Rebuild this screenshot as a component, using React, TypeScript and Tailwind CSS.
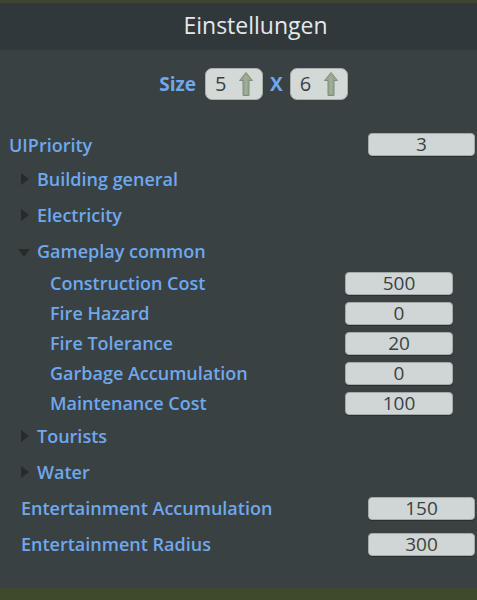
import React from "react";

const font = { fontFamily: '"Open Sans", "Noto Sans", sans-serif' };

function Arrow() {
  return (
    <svg width="14" height="24" viewBox="0 0 14 24">
      <polygon points="7,0.5 13.5,8.5 10,8.5 10,23.5 4,23.5 4,8.5 0.5,8.5" fill="#97a690" stroke="#7f8e79" strokeWidth="1" />
      <line x1="7" y1="4" x2="7" y2="22" stroke="#a9b6a2" strokeWidth="1" />
    </svg>
  );
}

function TriRight() {
  return (
    <svg width="8" height="12" viewBox="0 0 8 12">
      <polygon points="0,0 8,6 0,12" fill="#262b2c" />
    </svg>
  );
}

function TriDown() {
  return (
    <svg width="12" height="8" viewBox="0 0 12 8">
      <polygon points="0,0 12,0 6,8" fill="#262b2c" />
    </svg>
  );
}

function Box({ v, wide }: { v: string; wide?: boolean }) {
  return (
    <div
      className={`h-[23px] ${wide ? "w-[107px]" : "w-[108px]"} rounded-[4px] bg-[#cfd6d5] border border-[#a3aba9] shadow-[0_1px_0_#2a3031] flex items-center justify-center text-[19px] text-[#3b4243] leading-none`}
    >
      {v}
    </div>
  );
}

function Label({ children }: { children: React.ReactNode }) {
  return <span className="text-[18px] font-semibold text-[#6fa8ec] leading-none">{children}</span>;
}

function TreeRow({ label, open, h = "h-[36px]" }: { label: string; open?: boolean; h?: string }) {
  return (
    <div className={`${h} flex items-center pl-[21px]`}>
      <div className="w-[16px] flex items-center">{open ? <span className="-ml-[3px] mt-[4px]"><TriDown /></span> : <TriRight />}</div>
      <Label>{label}</Label>
    </div>
  );
}

function SubRow({ label, v }: { label: string; v: string }) {
  return (
    <div className="h-[30px] flex items-center justify-between pl-[50px] pr-[24px]">
      <Label>{label}</Label>
      <Box v={v} />
    </div>
  );
}

function TopRow({ label, v, pl, h = "h-[36px]" }: { label: string; v: string; pl: string; h?: string }) {
  return (
    <div className={`${h} flex items-center justify-between ${pl} pr-[2px]`}>
      <Label>{label}</Label>
      <Box v={v} wide />
    </div>
  );
}

function SizeBox({ v }: { v: string }) {
  return (
    <div className="h-[32px] w-[58px] rounded-[7px] bg-[#d3d9d6] border border-[#a7aeab] flex items-center pl-[9px] pr-[9px] justify-between">
      <span className="text-[20px] text-[#3b4243] leading-none">{v}</span>
      <Arrow />
    </div>
  );
}

export default function App() {
  return (
    <div className="w-[477px] h-[600px] flex flex-col bg-[#3e4830]" style={font}>
      <div className="h-[3px] bg-[#3d4431]" />
      <div className="h-[47px] bg-[#30383c] flex items-center justify-center pl-[34px]">
        <span className="text-[23px] text-[#e6e8e8] leading-none pb-[2px]">Einstellungen</span>
      </div>
      <div className="h-[538px] bg-[#394142] flex flex-col">
        <div className="mt-[18px] h-[32px] flex items-center justify-center gap-[8px] pl-[30px]">
          <span className="text-[19px] font-bold text-[#6fa8ec] leading-none mr-[1px]">Size</span>
          <SizeBox v="5" />
          <span className="text-[19px] font-bold text-[#6fa8ec] leading-none -mx-[1px]">X</span>
          <SizeBox v="6" />
        </div>
        <div className="mt-[33px]">
          <TopRow label="UIPriority" v="3" pl="pl-[9px]" h="h-[23px]" />
        </div>
        <div className="h-[5px]" />
        <TreeRow label="Building general" />
        <TreeRow label="Electricity" />
        <TreeRow label="Gameplay common" open h="h-[35px]" />
        <SubRow label="Construction Cost" v="500" />
        <SubRow label="Fire Hazard" v="0" />
        <SubRow label="Fire Tolerance" v="20" />
        <SubRow label="Garbage Accumulation" v="0" />
        <SubRow label="Maintenance Cost" v="100" />
        <TreeRow label="Tourists" />
        <TreeRow label="Water" />
        <TopRow label="Entertainment Accumulation" v="150" pl="pl-[21px]" />
        <TopRow label="Entertainment Radius" v="300" pl="pl-[21px]" />
      </div>
      <div className="flex-1 bg-[#3f4a2d]" />
    </div>
  );
}
